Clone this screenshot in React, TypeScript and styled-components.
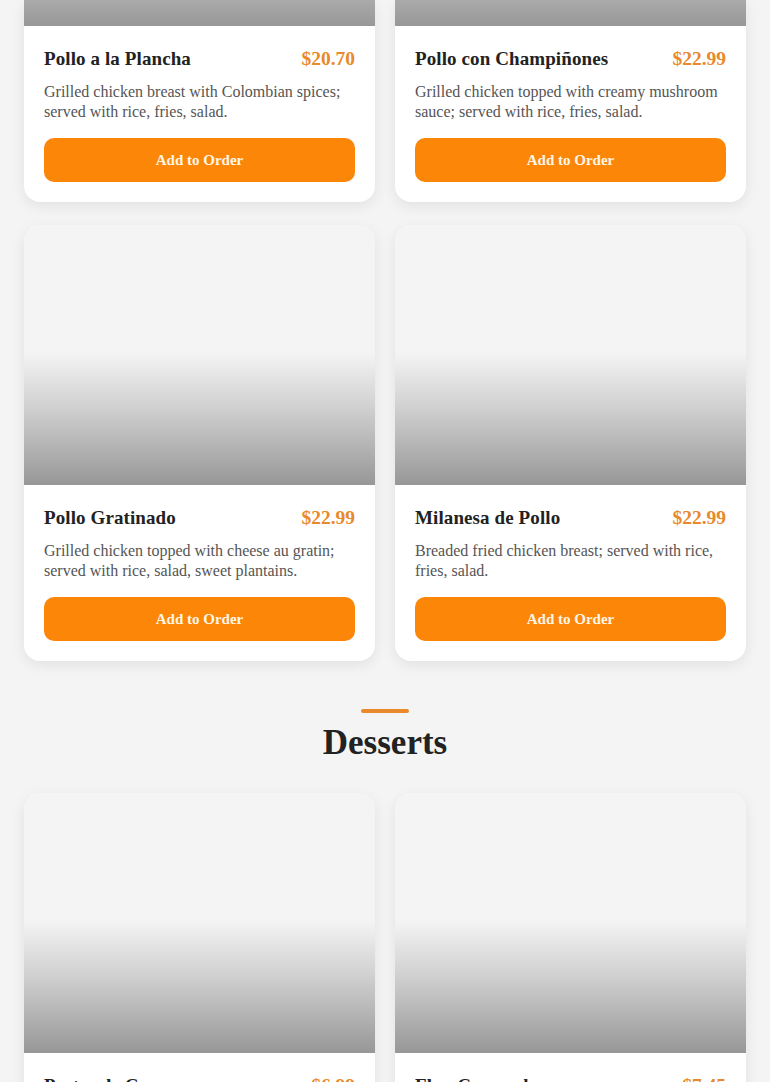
import React from "react";
import styled, { createGlobalStyle } from "styled-components";

const Global = createGlobalStyle`
  html, body { margin: 0; padding: 0; background: #f4f4f4; }
  body { font-family: "Liberation Serif", "DejaVu Serif", serif; color: #222; }
  * { box-sizing: border-box; }
`;

const Page = styled.main`
  display: flex;
  flex-direction: column;
  padding: 0 24px;
`;

const Grid = styled.div`
  display: grid;
  grid-template-columns: 1fr 1fr;
  column-gap: 20px;
  row-gap: 23px;
`;

const Card = styled.article<{ $full: boolean }>`
  background: #fff;
  border-radius: ${(p) => (p.$full ? "16px" : "0 0 16px 16px")};
  box-shadow: 0 4px 14px rgba(0, 0, 0, 0.08);
  overflow: hidden;
  display: flex;
  flex-direction: column;
`;

const Photo = styled.div<{ $h: number }>`
  height: ${(p) => p.$h}px;
  background: linear-gradient(
    to bottom,
    #f4f4f4 0%,
    #f4f4f4 49%,
    #cdcdcd 72%,
    #979797 100%
  );
  background-size: 100% 260px;
  background-position: bottom;
`;

const Body = styled.div`
  display: flex;
  flex-direction: column;
  padding: 20px;
`;

const TitleRow = styled.div`
  display: flex;
  justify-content: space-between;
  align-items: center;
  height: 26px;
`;

const Name = styled.h3`
  margin: 0;
  font-size: 19px;
  font-weight: 700;
  color: #222;
  letter-spacing: 0.1px;
`;

const Price = styled.span`
  font-size: 19.5px;
  font-weight: 700;
  color: #e8892b;
`;

const Desc = styled.p`
  margin: 10px 0 16px;
  font-size: 16px;
  line-height: 20px;
  color: #555;
  min-height: 40px;
`;

const AddButton = styled.button`
  height: 44px;
  border: none;
  border-radius: 10px;
  background: #fb8608;
  color: #fff6e6;
  font-family: inherit;
  font-size: 15px;
  font-weight: 700;
  cursor: pointer;
`;

const SectionHead = styled.header`
  display: flex;
  flex-direction: column;
  align-items: center;
  padding: 48px 0 32px;
`;

const Bar = styled.div`
  width: 48px;
  height: 4px;
  border-radius: 2px;
  background: #e8892b;
`;

const SectionTitle = styled.h2`
  margin: 12px 0 0;
  font-size: 35px;
  line-height: 36px;
  font-weight: 700;
  color: #222;
`;

type Item = { name: string; price: string; desc: string };

const chicken: Item[] = [
  { name: "Pollo a la Plancha", price: "$20.70", desc: "Grilled chicken breast with Colombian spices; served with rice, fries, salad." },
  { name: "Pollo con Champiñones", price: "$22.99", desc: "Grilled chicken topped with creamy mushroom sauce; served with rice, fries, salad." },
  { name: "Pollo Gratinado", price: "$22.99", desc: "Grilled chicken topped with cheese au gratin; served with rice, salad, sweet plantains." },
  { name: "Milanesa de Pollo", price: "$22.99", desc: "Breaded fried chicken breast; served with rice, fries, salad." },
];

const desserts: Item[] = [
  { name: "Postre de Coco", price: "$6.99", desc: "Traditional coconut dessert." },
  { name: "Flan Caramelo", price: "$7.45", desc: "Creamy caramel custard." },
];

function MenuCard({ item, photo, full }: { item: Item; photo: number; full: boolean }) {
  return (
    <Card $full={full}>
      <Photo $h={photo} />
      <Body>
        <TitleRow>
          <Name>{item.name}</Name>
          <Price>{item.price}</Price>
        </TitleRow>
        <Desc>{item.desc}</Desc>
        <AddButton>Add to Order</AddButton>
      </Body>
    </Card>
  );
}

export default function App() {
  return (
    <>
      <Global />
      <Page>
        <Grid>
          {chicken.map((it, i) => (
            <MenuCard key={it.name} item={it} photo={i < 2 ? 26 : 260} full={i >= 2} />
          ))}
        </Grid>
        <SectionHead>
          <Bar />
          <SectionTitle>Desserts</SectionTitle>
        </SectionHead>
        <Grid>
          {desserts.map((it) => (
            <MenuCard key={it.name} item={it} photo={260} full />
          ))}
        </Grid>
      </Page>
    </>
  );
}
